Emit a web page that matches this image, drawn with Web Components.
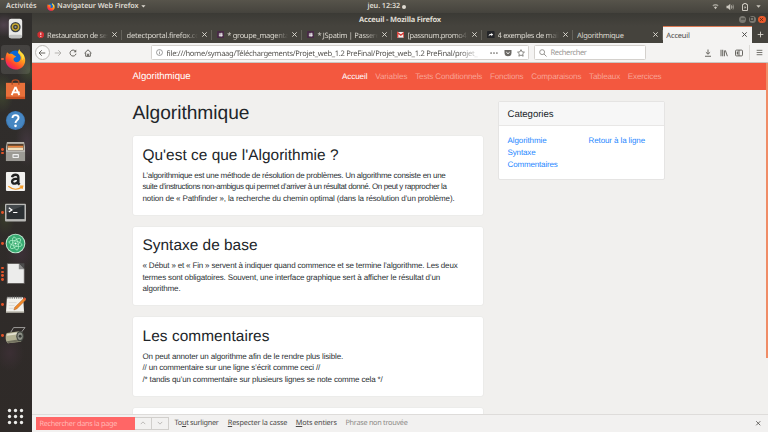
<!DOCTYPE html>
<html lang="fr"><head><meta charset="utf-8"><title>Acceuil</title>
<style>html,body{margin:0;height:432px;overflow:hidden;background:#33312e}</style></head>
<body><desktop-shell></desktop-shell>
<script>
const define=(name,html,init)=>customElements.define(name,class extends HTMLElement{
  connectedCallback(){ if(this.shadowRoot)return;
    const r=this.attachShadow({mode:'open'}); r.innerHTML=typeof html==='function'?html(this):html; if(init)init(this,r);}
});
const UI='"Noto Sans","Open Sans",sans-serif', WEB='"Liberation Sans",Arial,sans-serif';

/* One line of text whose tracking is set so that it spans w pixels. */
define('fit-text',`<style>:host{display:inline-block;white-space:nowrap;text-rendering:geometricPrecision;flex:none}span{display:inline-block}</style><span><slot></slot></span>`,(el,r)=>{
  const s=r.querySelector('span'),w=parseFloat(el.getAttribute('w'));
  if(w){const n=el.textContent.length,nat=s.getBoundingClientRect().width;
    s.style.letterSpacing=((w-nat)/n)+'px'; el.style.width=w+'px';}
});

const I={
music:`<rect x="4" y="0.7" width="14" height="20.5" rx="2.5" fill="#e9e9e7"/><rect x="4" y="17.5" width="14" height="3.7" rx="1.8" fill="#bfc0bf"/><circle cx="11" cy="9.5" r="5.4" fill="#3b4146"/><circle cx="11" cy="9.5" r="4" fill="#c7a72d"/><circle cx="11" cy="9.5" r="2.5" fill="#413c2c"/><circle cx="11" cy="9.5" r="1.2" fill="#8d9296"/>`,
firefox:`<defs><linearGradient id="g" x1=".9" y1="0" x2=".2" y2="1"><stop offset="0" stop-color="#fff44f"/><stop offset=".4" stop-color="#ff9e1c"/><stop offset=".75" stop-color="#ff4031"/><stop offset="1" stop-color="#e01490"/></linearGradient></defs><circle cx="11" cy="9.5" r="8" fill="#0a67d8"/><path d="M2.2 3.3C3.2 4 3.8 4.5 4.5 5.3C6 4.7 7.8 4.8 9 6.2L11.8 8C10 8.6 8.6 9.5 9 11.5C9.7 13.8 12.3 14.5 14.6 13C17.6 10.3 16.7 6.5 13.5 4.2C14 2.2 14.2 1 14.8.2C15.6 2.9 18 4 19.6 6.3C22 10 21.8 15.8 18 19C13.5 22.7 6.8 22 3 17.8C-.4 13.7.1 7.6 2.2 3.3Z" fill="url(#g)"/><path d="M14.8.2C14.4 5 18.7 6.4 18 11.8C20.6 9.6 20 6.7 19.6 6.3C18 4 15.6 2.9 14.8.2Z" fill="#ffdd3a"/>`,
soft:`<path d="M1 4h20v17H1z" fill="#e8703a"/><path d="M1 18.6h20V21H1z" fill="#c54f22"/><path d="M7.5 6V3.2C7.5.1 14.5.1 14.5 3.2V6" fill="none" stroke="#a94b24" stroke-width="1.4"/><path d="M11 8.2L7 17M11 8.2L15 17M7.2 14h8.2" stroke="#fff" stroke-width="1.9" fill="none"/>`,
help:`<circle cx="11" cy="11" r="10" fill="#3d78b3"/><circle cx="11" cy="10.5" r="9" fill="#4787c2"/><path d="M7.8 8.4C7.9 4.3 14.2 4.5 14.2 8.2C14.2 10.8 11 10.7 11 13.5" fill="none" stroke="#fff" stroke-width="2"/><circle cx="11" cy="16.6" r="1.4" fill="#fff"/>`,
files:`<path d="M2 1h18l1 5v15H1V6z" fill="#b9b5ad"/><path d="M2.5 3h17v8h-17z" fill="#55402d"/><path d="M3 5h16v2H3z" fill="#e88541"/><path d="M3 7h16v2.5H3z" fill="#efe1bf"/><path d="M1 10h20v11H1z" fill="#9c9a95"/><path d="M1 10h20v1H1z" fill="#d7d5d0"/><rect x="7.8" y="13.5" width="6.8" height="4.3" rx=".8" fill="#eee"/><path d="M9 15.2h4.4v1.2H9z" fill="#777"/>`,
amazon:`<rect x="1" y="1" width="20" height="20" rx="1" fill="#f2f1ef"/><path d="M7.4 6.5C8 3.1 14 2.9 14 6.5V13L15.3 14.3M14 8C9.6 7.8 7.3 9 7.4 11.3C7.6 14.6 13.4 13.4 13.8 10.2" fill="none" stroke="#222" stroke-width="2.5"/><path d="M3.5 16C8.3 20 14 19.4 17.7 16.9M15.4 15.8L18.6 15.8L17.8 18.7" fill="none" stroke="#f59a25" stroke-width="1.3"/>`,
term:`<rect x="0" y="1.8" width="22" height="18.5" rx="1" fill="#b8b8b5"/><path d="M1.6 3.3h18.8v14.6H1.6z" fill="#2b3033"/><path d="M1.6 3.3h18.8L1.6 11z" fill="#454a4d"/><path d="M4 6l3.2 2.3L4 10.6M8.5 11h4.5" fill="none" stroke="#fff" stroke-width="1.3"/>`,
atom:`<circle cx="11" cy="11" r="10.3" fill="#c6e9d4"/><circle cx="11" cy="11" r="9.3" fill="#38aa72"/><g fill="none" stroke="#a6ecc2" stroke-width=".9"><ellipse cx="11" cy="11" rx="7" ry="2.7" transform="rotate(15 11 11)"/><ellipse cx="11" cy="11" rx="7" ry="2.7" transform="rotate(75 11 11)"/><ellipse cx="11" cy="11" rx="7" ry="2.7" transform="rotate(135 11 11)"/></g><circle cx="11" cy="11" r="1.1" fill="#eafff0"/>`,
libre:`<path d="M2.3.5h12.4l5.5 5.8v15.2H2.3z" fill="#ececeb" stroke="#55524f" stroke-width=".8"/><path d="M14 .3h6.3v6.6z" fill="#4b4b4b"/><path d="M14.5.5v6h5.7z" fill="#8a8a8a"/>`,
notes:`<path d="M2 3.5h17l1 15.7H1z" fill="#f2f1ec"/><path d="M1 18h19v1.6H1z" fill="#bcb9ae"/><path d="M3 2v3M5.3 2v3M7.6 2v3M9.9 2v3M12.2 2v3M14.5 2v3M16.8 2v3" stroke="#555" stroke-width=".8"/><path d="M4 9h8M4 12h6M4 15h5" stroke="#c8c8c5" stroke-width=".6"/><path d="M20.3 4L22 5.9 12.3 15.7 9.3 16.7 10.3 13.8z" fill="#f08a2b" stroke="#894e23" stroke-width=".4"/><path d="M19.3 4.8L21 6.6 22.4 5.1 20.6 3.3z" fill="#d8513c"/>`,
roll:`<path d="M6 7.6L9 2.7h12l-4 5" fill="none" stroke="#a1a09d" stroke-width="1"/><path d="M2 8.5L15 6.5 17 17.5 3 19C.2 18 0 10 2 8.5z" fill="#b3b294"/><path d="M2.5 9.3L14 7.6v2L2 11.3z" fill="#e2e1cf"/><path d="M2 17L15 15v2.4L3 19z" fill="#737260"/><ellipse cx="15.8" cy="11.8" rx="4" ry="5.5" fill="#454943"/><ellipse cx="15.8" cy="11.8" rx="2.7" ry="4" fill="#8f9288"/><circle cx="15.9" cy="11.8" r="1.5" fill="#363935"/>`,
grid:[4.7,11,17.3].map(y=>[4.7,11,17.3].map(x=>`<circle cx="${x}" cy="${y}" r="1.75" fill="#ececea"/>`).join('')).join('')
};
/* name → 22×22 artwork, drawn at the requested size */
define('app-icon',el=>{const s=el.getAttribute('size')||21;return`<style>:host{display:block;flex:none;width:${s}px;height:${s}px}svg{display:block;width:100%;height:100%}</style><svg viewBox="0 0 22 22">${I[el.getAttribute('name')]}</svg>`});

const S={
close:'<path d="M3 3l10 10M13 3l-10 10"/>',
plus:'<path d="M8 1.5v13M1.5 8h13"/>',
back:'<path d="M14.5 8H2M7.5 2.5L2 8l5.5 5.5"/>',
fwd:'<path d="M1.5 8H14M8.5 2.5L14 8l-5.5 5.5"/>',
reload:'<path d="M13 4.6A6 6 0 1 0 14 9.5"/><path d="M14.5 1.2V6.6H9.2z" fill="currentColor" stroke="none"/>',
home:'<path d="M1 8.3L8 1.6l7 6.7M3.4 7.3v7.2h9.2V7.3"/><path d="M6.3 14.5V9.3h3.4v5.2z" fill="currentColor" stroke="none"/>',
info:'<circle cx="8" cy="8" r="6.8"/><path d="M8 7v5M8 4v1.6"/>',
dots:'<g fill="currentColor" stroke="none"><circle cx="2.2" cy="8" r="1.7"/><circle cx="8" cy="8" r="1.7"/><circle cx="13.8" cy="8" r="1.7"/></g>',
pocket:'<path d="M1 2h14v5.5a7 7 0 0 1-14 0z" fill="currentColor" stroke="none"/><path d="M4.7 6.3L8 9.4l3.3-3.1" stroke="#fff"/>',
star:'<path d="M8 1.3l2.1 4.4 4.8.6-3.5 3.3.9 4.8L8 12.1l-4.3 2.3.9-4.8L1.1 6.3l4.8-.6z"/>',
search:'<circle cx="6.3" cy="6.3" r="4.9"/><path d="M10 10l5 5"/>',
down:'<path d="M8 1v9M3.8 6.5L8 10.5l4.2-4M2 14.5h12"/>',
lib:'<path d="M2 1.5v13M5.4 1.5v13M8.8 3v11.5M10.7 2.7l4 11.7" stroke-width="2"/>',
side:'<rect x="1" y="2.2" width="14" height="11.6" rx="2"/><path d="M3.5 5h3v6h-3z" fill="currentColor" stroke="none"/><path d="M8 2v12"/>',
menu:'<path d="M1.5 3h13M1.5 8h13M1.5 13h13"/>',
up:'<path d="M2 11l6-6 6 6"/>',
dn:'<path d="M2 5l6 6 6-6"/>',
caret:'<path d="M1 4h14L8 12z" fill="currentColor" stroke="none"/>',
wifi:'<path d="M1 5.5c4-4 10-4 14 0L13 8C10 5.3 6 5.3 3 8z" fill="currentColor" stroke="none" opacity=".65"/><path d="M4.5 9.5q3.5-2.6 7 0L8 14.5z" fill="currentColor" stroke="none"/>',
vol:'<path d="M1 5.5h3L8.5 1.5v13L4 10.5H1z" fill="currentColor" stroke="none"/><path d="M11 5q2 3 0 6"/><path d="M14 3q2.5 5 0 10" opacity=".5"/>',
bat:'<path d="M3 3h2.5V1h5v2H13v12H3z"/><path d="M9 5L5.7 9h2l-.5 3.5L10.5 8H8.3z" fill="currentColor" stroke="none"/>'
};
define('line-icon',el=>{const s=el.getAttribute('size')||8;return`<style>:host{display:block;flex:none;width:${s}px;height:${s}px}svg{display:block;width:100%;height:100%}</style><svg viewBox="0 0 16 16" fill="none" stroke="currentColor" stroke-width="${el.getAttribute('sw')||2}">${S[el.getAttribute('name')]}</svg>`});

const G={
alert:'<path d="M5 1h6l4 4v6l-4 4H5l-4-4V5z" fill="#d12f32"/><path d="M8 3.5v5.2M8 10.5v2" stroke="#fff" stroke-width="2"/>',
slack:'<rect width="16" height="16" rx="2" fill="#482a46"/><path d="M6.5 4v8.3M9.8 3.7v8.3M3.8 6.5h8.4M3.8 9.7h8.4" stroke="#fff" stroke-width="1.5"/>',
mail:'<rect y="2" width="16" height="12" fill="#f4eeee"/><path d="M1.5 14V3.5L8 9l6.5-5.5V14" fill="none" stroke="#d43a33" stroke-width="2.7"/>',
arrow:'<rect width="16" height="16" rx="2" fill="#242528"/><path d="M3 11q1-5 6-5V4l4 3.6L9 11V8.5Q6 8.5 3 11z" fill="#fff"/>'
};
define('browser-tab',el=>{
  const a=el.hasAttribute('active'),ic=el.getAttribute('icon');
  return`<style>
  :host{display:flex;box-sizing:border-box;width:90.1px;height:17px;flex:none;align-items:center;padding:0 4px 0 ${a?3.7:4.5}px;font:7.5px/14px ${UI};
  color:${a?'#4b4a47':'#dad7cf'};${a?'background:#f4f3f2;box-shadow:inset 0 1px #dc7a54;width:89px;':'background:linear-gradient(#64625b,#64625b) right 3.5px/1px 10px no-repeat;'}}
  .t{flex:1;overflow:hidden;white-space:nowrap;min-width:0;height:14px;${el.hasAttribute('fade')?'-webkit-mask-image:linear-gradient(90deg,#000 calc(100% - 13px),transparent);mask-image:linear-gradient(90deg,#000 calc(100% - 13px),transparent)':''}}
  svg{width:7.6px;height:7.6px;margin-right:3px;flex:none} line-icon{margin-left:3px}
  </style>${ic?`<svg viewBox="0 0 16 16">${G[ic]}</svg>`:''}<div class="t"><slot></slot></div><line-icon name="close" size="7" sw="2.2"></line-icon>`});

define('system-bar',`<style>
:host{display:flex;position:relative;height:13px;align-items:center;box-sizing:border-box;padding:0 7px 0 6px;background:linear-gradient(#57544b,#45433d);color:#dfdbd2;font:600 7.2px/13px ${UI}}
app-icon{margin:0 2.5px 0 10px} line-icon.c{margin-left:2.5px}
.clock{position:absolute;left:367.5px;top:0;display:flex;align-items:center;gap:1.5px}
.clock i{width:4px;height:4px;border-radius:50%;background:#dfdbd2}
.r{margin-left:auto;display:flex;gap:7px;align-items:center;color:#cbc7be}
</style><fit-text w="30.5">Activités</fit-text><app-icon name="firefox" size="8"></app-icon><fit-text w="81.5">Navigateur Web Firefox</fit-text><line-icon class="c" name="caret" size="4.8"></line-icon>
<div class="clock"><fit-text w="32.5">jeu. 12:32</fit-text><i></i></div>
<div class="r"><line-icon name="wifi" size="7"></line-icon><line-icon name="vol" size="8"></line-icon><line-icon name="bat" size="8"></line-icon><line-icon name="caret" size="5"></line-icon></div>`);

define('dock-item',el=>{const n=+el.getAttribute('dots')||0;return`<style>
:host{display:grid;grid-template-columns:5px 21px 6px;align-items:center;height:30.7px;flex:none}
.d{display:flex;flex-direction:column;gap:1.1px;padding-left:1px}.d i{width:2.8px;height:2.8px;border-radius:50%;background:#e0532a}
.b{display:flex;justify-content:center;${el.hasAttribute('on')?'background:rgba(255,255,255,.1);box-shadow:0 0 0 4px rgba(255,255,255,.1);border-radius:1px':''}}
</style><div class="d">${'<i></i>'.repeat(n)}</div><div class="b"><app-icon name="${el.getAttribute('name')}"></app-icon></div>`});

define('app-dock',`<style>
:host{display:flex;flex-direction:column;width:32px;box-sizing:border-box;height:419px;overflow:hidden;
background:radial-gradient(ellipse 15px 12px at 4px 12px,#51434e,transparent),radial-gradient(ellipse 12px 15px at 29px 57px,#3f4731,transparent),radial-gradient(ellipse 12px 20px at 2px 80px,#40472f,transparent),radial-gradient(ellipse 12px 24px at 27px 130px,#42373f,transparent),radial-gradient(ellipse 10px 18px at 5px 205px,#383c2a,transparent),radial-gradient(ellipse 14px 18px at 20px 240px,#3d3038,transparent),radial-gradient(ellipse 14px 18px at 10px 340px,#3b2f34,transparent),linear-gradient(#302e2c,#2f2a28)}
dock-item:last-child{margin-top:auto}
</style><dock-item name="music"></dock-item><dock-item name="firefox" dots="1" on></dock-item><dock-item name="soft"></dock-item><dock-item name="help"></dock-item><dock-item name="files" dots="2"></dock-item><dock-item name="amazon"></dock-item><dock-item name="term" dots="1"></dock-item><dock-item name="atom" dots="1"></dock-item><dock-item name="libre" dots="4"></dock-item><dock-item name="notes" dots="1"></dock-item><dock-item name="roll" dots="1"></dock-item><dock-item name="grid"></dock-item>`);

define('window-title',`<style>
:host{display:flex;position:relative;height:13px;align-items:center;justify-content:flex-end;gap:2.3px;padding-right:2.5px;background:linear-gradient(#3b3a35,#45433d);color:#dfdbd2;font:bold 7.5px/13px ${UI}}
fit-text{position:absolute;left:327px;top:.6px}
i{display:grid;place-items:center;width:7.3px;height:7.3px;border-radius:50%;background:#7b7972;color:#3b3a35}
i.x{background:#e95a2c;color:#5a2413}
</style><fit-text w="82">Acceuil - Mozilla Firefox</fit-text><i><svg width="4" height="4"><path d="M0 2h4" stroke="currentColor"/></svg></i><i><svg width="4" height="4"><rect x=".5" y=".5" width="3" height="3" fill="none" stroke="currentColor" stroke-width=".8"/></svg></i><i class="x"><line-icon name="close" size="5" sw="2.5"></line-icon></i>`);

define('tab-strip',`<style>:host{display:flex;height:17px;background:#45433d;color:#dad7cf;overflow:hidden}line-icon{margin:5px 0 0 5px}</style>
<browser-tab icon="alert" fade><fit-text w="66">Restauration de sess</fit-text></browser-tab>
<browser-tab fade><fit-text w="73">detectportal.firefox.co</fit-text></browser-tab>
<browser-tab icon="slack" fade><fit-text w="61.5">* groupe_magenta</fit-text></browser-tab>
<browser-tab icon="slack" fade><fit-text w="62">* JSpatim | Passere</fit-text></browser-tab>
<browser-tab icon="mail" fade><fit-text w="61">[passnum.promo4]</fit-text></browser-tab>
<browser-tab icon="arrow" fade><fit-text w="65">4 exemples de mails</fit-text></browser-tab>
<browser-tab><fit-text w="46.5">Algorithmique</fit-text></browser-tab>
<browser-tab active><fit-text w="23.5">Acceuil</fit-text></browser-tab>
<line-icon name="plus" size="7"></line-icon>`);

define('nav-toolbar',`<style>
:host{display:flex;box-sizing:border-box;height:20px;align-items:center;background:#f4f3f2;border-bottom:1px solid #c9c6c2;color:#66645f;padding:0 5.5px 0 2.5px;font:7.6px/14px ${UI}}
.bk{display:grid;place-items:center;box-sizing:border-box;width:15px;height:15px;border:1px solid #bdbab6;border-radius:50%;background:#fbfbfa}
.f{color:#b5b3b0;margin-left:4px}.re{margin-left:7.5px}.ho{margin-left:7px}
.in{display:flex;align-items:center;box-sizing:border-box;height:14.6px;background:#fff;border:1px solid #d4d1cd;border-radius:1.5px}
.url{width:378.5px;margin-left:58.5px;padding:0 3px 0 4px}
.url .t{margin-left:4px;width:315px;overflow:hidden;flex:none;-webkit-mask-image:linear-gradient(90deg,#000 292px,transparent 314px);mask-image:linear-gradient(90deg,#000 292px,transparent 314px);height:14px;color:#55534f}
.url .a{margin-left:auto;display:flex;gap:5.5px;align-items:center;color:#6b6965}
.s{width:112px;margin-left:5px;padding-left:4px;gap:3.5px;color:#989693}
.r{margin-left:auto;display:flex;align-items:center;gap:7.6px}.m{border-left:1px solid #dcdad7;height:15px;display:flex;align-items:center;padding-left:5.5px;margin-left:-2px}
.g{color:#777}
</style><span class="bk"><line-icon name="back" size="8"></line-icon></span><line-icon class="f" name="fwd" size="8"></line-icon><line-icon class="re" name="reload" size="8"></line-icon><line-icon class="ho" name="home" size="8"></line-icon>
<div class="in url"><line-icon class="g" name="info" size="7" sw="1.6"></line-icon><div class="t"><fit-text w="311">file:///home/symaag/Téléchargements/Projet_web_1.2 PreFinal/Projet_web_1.2 PreFinal/projet_</fit-text></div><div class="a"><line-icon name="dots" size="8"></line-icon><line-icon name="pocket" size="8"></line-icon><line-icon name="star" size="8" sw="1.6"></line-icon></div></div>
<div class="in s"><line-icon name="search" size="8"></line-icon><fit-text w="36">Rechercher</fit-text></div>
<div class="r"><line-icon name="down" size="8"></line-icon><line-icon name="lib" size="8"></line-icon><line-icon name="side" size="8"></line-icon><span class="m"><line-icon name="menu" size="7"></line-icon></span></div>`);

define('site-nav',`<style>
:host{display:flex;box-sizing:border-box;height:27px;align-items:center;background:#f3583f;padding:1px 0 0 100.5px;color:#fff;font:8.1px/12px ${WEB}}
.b{font-size:9.6px}nav{display:flex;margin-left:151.5px;gap:7.8px;color:#f9a294}.on{color:#fff}
</style><fit-text class="b" w="58">Algorithmique</fit-text><nav><fit-text class="on" w="25.4">Accueil</fit-text><fit-text w="32.2">Variables</fit-text><fit-text w="67">Tests Conditionnels</fit-text><fit-text w="33.5">Fonctions</fit-text><fit-text w="50">Comparaisons</fit-text><fit-text w="31">Tableaux</fit-text><fit-text w="33.5">Exercices</fit-text></nav>`);

define('article-card',`<style>
:host{display:block;box-sizing:border-box;height:78.6px;background:#fff;border-radius:2px;box-shadow:0 0 0 .6px #e8e7e6;padding:9.6px 10px;flex:none}
h2{margin:0 0 4.2px;font:400 15.4px/18.5px ${WEB};color:#212529}
.p{display:flex;flex-direction:column;font:8px/11.6px ${WEB};color:#2b2f33}
</style><h2><slot name="title"></slot></h2><div class="p"><slot></slot></div>`);

define('category-card',`<style>
:host{display:block;box-sizing:border-box;width:167.5px;height:78.6px;background:#fff;border:1px solid #e5e4e3;border-radius:2px;font-family:${WEB};margin-top:11px}
header{box-sizing:border-box;height:23.5px;border-bottom:1px solid #e8e7e6;background:#f7f7f7;padding:5.6px 9px;font-size:9.6px;line-height:12px;color:#212529}
.l{display:grid;grid-template-columns:81px 1fr;padding:9.9px 9px;font-size:8px;line-height:11.6px;color:#1f88ff}.l div{display:flex;flex-direction:column}
</style><header><fit-text w="46">Categories</fit-text></header><div class="l"><div><fit-text w="39">Algorithmie</fit-text><fit-text w="28">Syntaxe</fit-text><fit-text w="50.2">Commentaires</fit-text></div><div><fit-text w="56.5">Retour à la ligne</fit-text></div></div>`);

define('web-page',`<style>
:host{display:flex;flex-direction:column;position:relative;flex:1;min-height:0;overflow:hidden;background:#f1f0ee}
main{display:flex;gap:15px;padding-left:100.5px;flex:1;min-height:0}
.c{width:350px;display:flex;flex-direction:column;gap:11.9px}
h1{margin:11.4px 0 0;font:400 19.2px/23px ${WEB};color:#212529;height:23px}
.bar{position:absolute;right:0;top:0;width:2.5px;height:295px;background:#f08c66}
</style><site-nav></site-nav><main><div class="c"><h1><fit-text w="117">Algorithmique</fit-text></h1>
<article-card><fit-text slot="title" w="196">Qu'est ce que l'Algorithmie ?</fit-text><fit-text w="303">L’algorithmique est une méthode de résolution de problèmes. Un algorithme consiste en une</fit-text><fit-text w="304">suite d’instructions non-ambigus qui permet d’arriver à un résultat donné. On peut y rapprocher la</fit-text><fit-text w="312">notion de « Pathfinder », la recherche du chemin optimal (dans la résolution d’un problème).</fit-text></article-card>
<article-card><fit-text slot="title" w="115">Syntaxe de base</fit-text><fit-text w="315">« Début » et « Fin » servent à indiquer quand commence et se termine l’algorithme. Les deux</fit-text><fit-text w="297.5">termes sont obligatoires. Souvent, une interface graphique sert à afficher le résultat d’un</fit-text><fit-text w="38">algorithme.</fit-text></article-card>
<article-card><fit-text slot="title" w="127">Les commentaires</fit-text><fit-text w="200.5">On peut annoter un algorithme afin de le rendre plus lisible.</fit-text><fit-text w="177.5">// un commentaire sur une ligne s’écrit comme ceci //</fit-text><fit-text w="240">/* tandis qu’un commentaire sur plusieurs lignes se note comme cela */</fit-text></article-card>
<article-card></article-card></div><category-card></category-card></main><div class="bar"></div>`);

define('find-bar',`<style>
:host{display:flex;box-sizing:border-box;height:18.5px;align-items:center;background:#f2f1f0;border-top:1px solid #dedcda;padding:0 7px 0 4px;color:#4c4a48;font:7.3px/14px ${UI}}
.i{box-sizing:border-box;width:98.5px;height:13.5px;background:#ff6666;color:#ffb9b5;padding-left:3.5px;line-height:13px}
.b{box-sizing:border-box;display:grid;place-items:center;width:17px;height:13.5px;border:1px solid #d1cfcc;border-left:0;color:#aaa8a5}
.x{margin-left:auto}.g{color:#8c8a87}u{text-underline-offset:1px;text-decoration-thickness:.6px}
</style><div class="i"><fit-text w="77.5">Rechercher dans la page</fit-text></div><span class="b"><line-icon name="up" size="6"></line-icon></span><span class="b"><line-icon name="dn" size="6"></line-icon></span>
<fit-text w="44" style="margin-left:6px">To<u>u</u>t surligner</fit-text><fit-text w="59.5" style="margin-left:9.3px"><u>R</u>especter la casse</fit-text><fit-text w="41" style="margin-left:8.5px"><u>M</u>ots entiers</fit-text><fit-text class="g" w="62" style="margin-left:8.7px">Phrase non trouvée</fit-text><line-icon class="x" name="close" size="6.5"></line-icon>`);

define('browser-window',`<style>:host{display:flex;flex-direction:column;flex:1;min-width:0;height:419px}</style><window-title></window-title><tab-strip></tab-strip><nav-toolbar></nav-toolbar><web-page></web-page><find-bar></find-bar>`);
define('desktop-shell',`<style>:host{display:flex;flex-direction:column;width:768px;height:432px;overflow:hidden}.w{display:flex}</style><system-bar></system-bar><div class="w"><app-dock></app-dock><browser-window></browser-window></div>`);
</script></body></html>
